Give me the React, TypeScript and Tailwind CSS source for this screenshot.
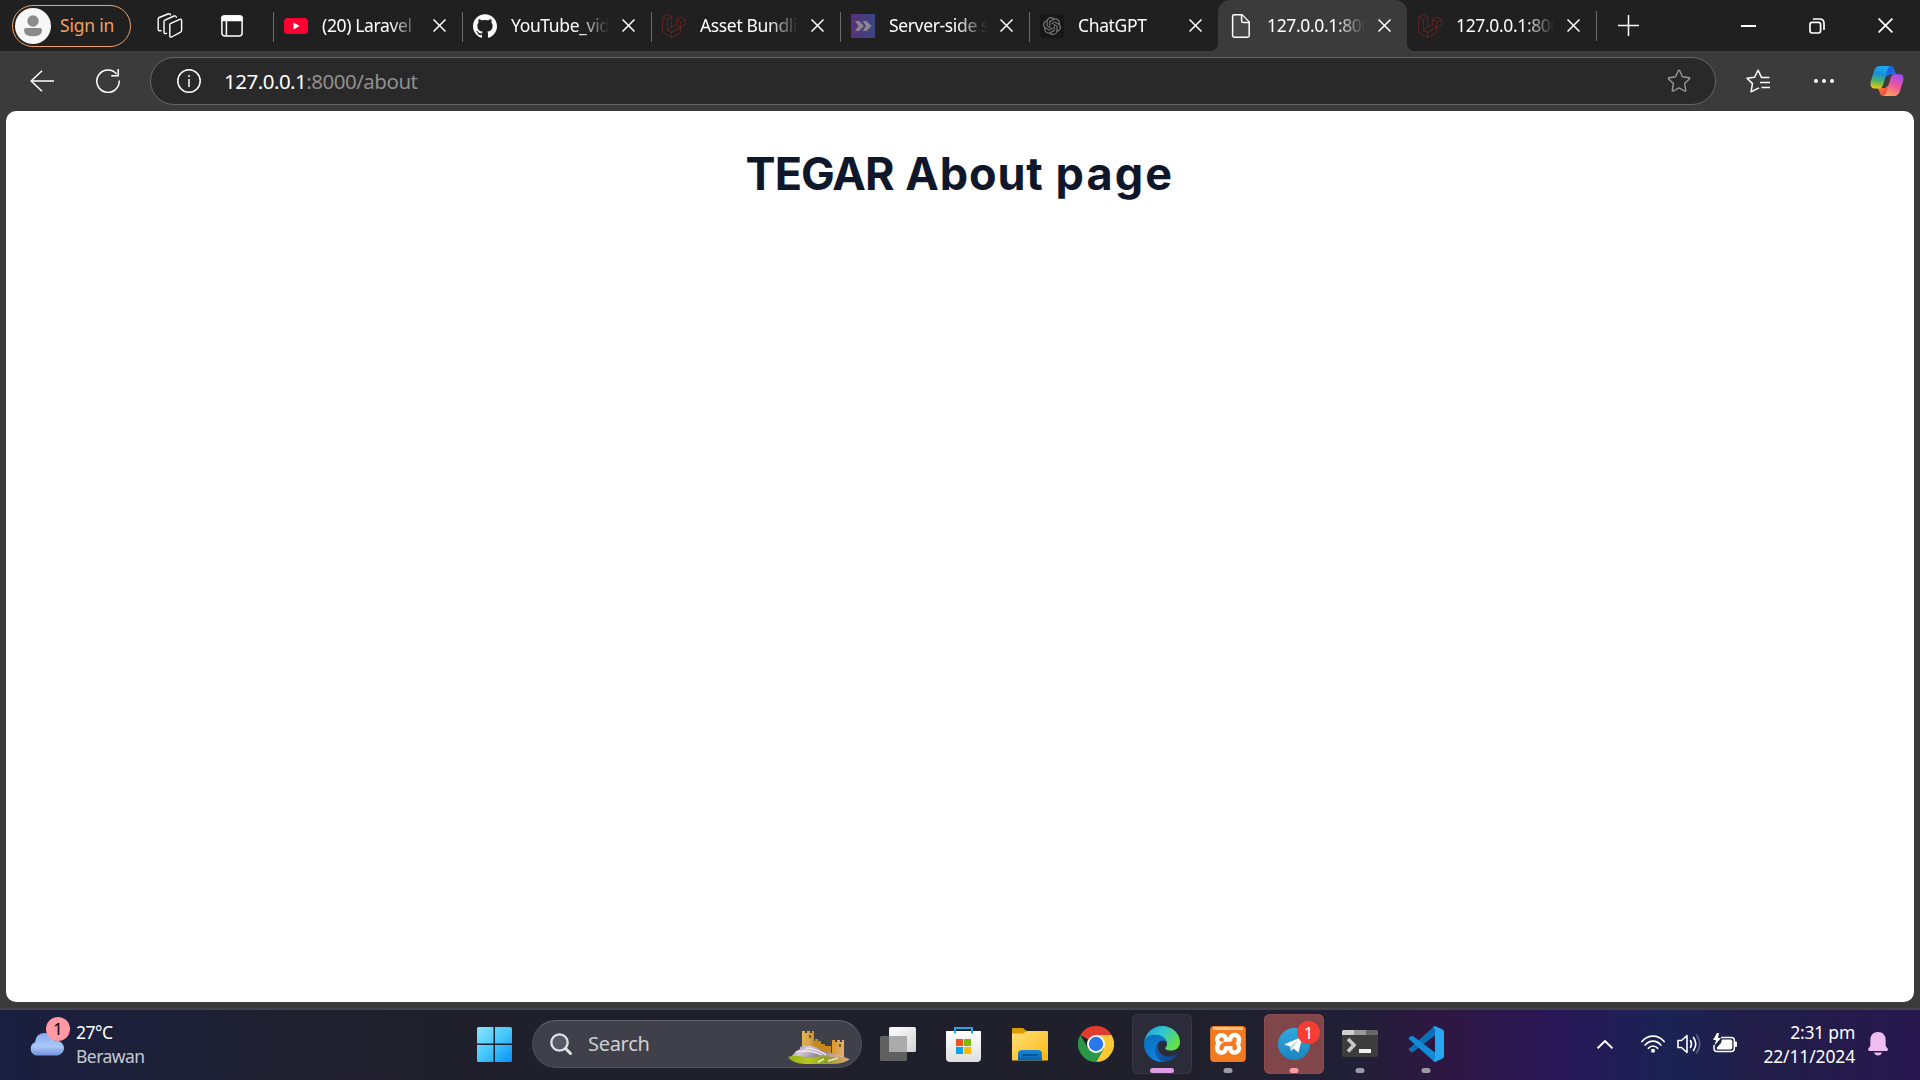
import React, { ReactNode } from "react";
import { SiGithub, SiLaravel, SiOpenai, SiXampp } from "react-icons/si";

const sans = "font-['Noto_Sans',sans-serif]";

function Close({ size = 13 }: { size?: number }) {
  return (
    <svg width={size} height={size} viewBox="0 0 13 13" stroke="#fff" strokeWidth="1.5" fill="none" className="shrink-0">
      <path d="M.5 .5L12.5 12.5M12.5 .5L.5 12.5" />
    </svg>
  );
}

const YouTube = () => (
  <svg width="24" height="24" viewBox="0 0 24 24">
    <rect y="4" width="24" height="16" rx="3.5" fill="#f03" />
    <path d="M9.5 8.6L15.7 12L9.5 15.4Z" fill="#fff" />
  </svg>
);
const Laravel = () => <SiLaravel size={24} color="#6f2520" />;
const Pipeline = () => (
  <svg width="24" height="24" viewBox="0 0 24 24">
    <defs>
      <linearGradient id="pipe" x2="1">
        <stop stopColor="#55327a" />
        <stop offset="1" stopColor="#3c4680" />
      </linearGradient>
    </defs>
    <rect width="24" height="24" fill="url(#pipe)" />
    <path d="M4 7H8L13 12L8 17H4L7.500 12ZM11.5 7H15.5L20.5 12L15.5 17H11.5L15 12Z" fill="#8c8490" />
  </svg>
);
const Gpt = () => (
  <div className="flex size-6 items-center justify-center rounded bg-[#171717]">
    <SiOpenai size={18} color="#777" />
  </div>
);
const Page = () => (
  <svg width="24" height="24" viewBox="0 0 24 24" fill="#484848" stroke="#fff" strokeWidth="1.5" strokeLinejoin="round">
    <path d="M5.2 .8H13L20.2 8V21.5Q20.2 23.2 18.5 23.2H5.2Q3.6 23.2 3.6 21.5V2.4Q3.6 .8 5.2 .8Z" />
    <path d="M12.6 1V7Q12.6 8.6 14.2 8.6H20" />
  </svg>
);

type TabData = { icon: ReactNode; text: string; active?: boolean; sep?: boolean };
const tabs: TabData[] = [
  { icon: <YouTube />, text: "(20) Laravel", sep: true },
  { icon: <SiGithub size={24} color="#fff" />, text: "YouTube_vide", sep: true },
  { icon: <Laravel />, text: "Asset Bundlin", sep: true },
  { icon: <Pipeline />, text: "Server-side s", sep: true },
  { icon: <Gpt />, text: "ChatGPT", sep: true },
  { icon: <Page />, text: "127.0.0.1:8000", active: true },
  { icon: <Laravel />, text: "127.0.0.1:8000" },
];

function Tab({ icon, text, active, sep }: TabData) {
  return (
    <div className={"relative flex h-[51px] w-[189px] shrink-0 items-center pl-[11px] " + (active ? "rounded-t-xl bg-[#3b3b3b]" : "")}>
      {sep && <div className="absolute left-0 top-3 h-[30px] w-px bg-[#6a6a6a]" />}
      {active && (
        <>
          <div className="absolute -left-2 bottom-0 size-2 bg-[radial-gradient(circle_at_0_0,#202020_8px,#3b3b3b_8.5px)]" />
          <div className="absolute -right-2 bottom-0 size-2 bg-[radial-gradient(circle_at_100%_0,#202020_8px,#3b3b3b_8.5px)]" />
        </>
      )}
      <div className="size-6 shrink-0">{icon}</div>
      <div className="-mt-px ml-[14px] w-[98px] overflow-hidden whitespace-nowrap text-[17.5px] leading-6 tracking-[-0.36px] text-white [mask-image:linear-gradient(90deg,#000_68px,transparent_100%)]">
        {text}
      </div>
      <div className="ml-[13px]"><Close /></div>
    </div>
  );
}

function BrowserTabs() {
  return (
    <div className="flex h-[51px] items-center bg-[#202020]">
      <div className="ml-3 flex h-[42px] w-[119px] items-center rounded-full border-[1.5px] border-[#f0a163] pl-[2px]">
        <svg width="36" height="36" viewBox="0 0 36 36">
          <circle cx="18" cy="18" r="18" fill="#f7f7f7" />
          <circle cx="18" cy="13" r="5.7" fill="#8b8b8b" />
          <path d="M11 20H25Q27 20 27 22Q27 28.3 18 28.3Q9 28.3 9 22Q9 20 11 20Z" fill="#8b8b8b" />
        </svg>
        <span className="ml-[9px] whitespace-nowrap text-[17.5px] tracking-[-0.2px] text-[#f0a163]">Sign in</span>
      </div>
      <svg className="ml-[26px]" width="26" height="26" viewBox="0 0 26 26" fill="none" stroke="#fff" strokeWidth="1.4" strokeLinejoin="round" strokeLinecap="round">
        <path d="M12.8 11.8Q12.8 10.7 13.8 10.3L22.8 6.3Q24.6 5.7 24.6 7.4V17.6Q24.6 18.6 23.6 19.1L14.6 24Q12.8 24.6 12.8 23Z" />
        <path d="M9.5 20.3Q7 21.3 7 19.3V8.6Q7 7.6 8 7.1L17 3Q19 2.4 19.3 4.2" />
        <path d="M4 17.6Q1.2 18.3 1.2 16.3V6Q1.2 5 2.2 4.5L11 1Q13 .4 13.4 1.8" />
      </svg>
      <svg className="ml-[38px]" width="22" height="22" viewBox="0 0 22 22" fill="none" stroke="#fff" strokeWidth="1.5">
        <rect x=".9" y=".9" width="20.2" height="20.2" rx="3" />
        <path d="M1 2.5Q1 1 3 1H19Q21 1 21 2.5V5.5H1Z" fill="#fff" />
        <path d="M5.4 6V21" />
      </svg>
      <div className="ml-[30px] flex">
        {tabs.map((t, i) => <Tab key={i} {...t} />)}
      </div>
      <div className="h-[30px] w-px bg-[#6a6a6a]" />
      <svg className="mb-px ml-[21px]" width="21" height="21" viewBox="0 0 21 21" stroke="#fff" strokeWidth="1.5"><path d="M10.5 0V21M0 10.5H21" /></svg>
      <div className="ml-auto mr-[27px] flex items-center gap-[53px]">
        <div className="h-[2px] w-[15px] bg-white" />
        <svg width="16" height="16" viewBox="0 0 16 16" fill="none" stroke="#fff" strokeWidth="1.700" strokeLinecap="round">
          <rect x="1" y="4.4" width="10.6" height="10.6" rx="2.2" />
          <path d="M4.6 1H10.500Q15 1 15 5.500V11.2" />
        </svg>
        <Close size={15} />
      </div>
    </div>
  );
}

function Copilot() {
  return (
    <svg width="34" height="32" viewBox="0 0 34 32">
      <defs>
        <linearGradient id="cpA" x1=".4" x2=".25" y2="1"><stop stopColor="#19a9ee" /><stop offset=".35" stopColor="#1b8fd8" /><stop offset=".65" stopColor="#4fb26b" /><stop offset="1" stopColor="#f5c80a" /></linearGradient>
        <linearGradient id="cpB" x1=".7" x2=".3" y2="1"><stop stopColor="#a44af2" /><stop offset=".5" stopColor="#f0569a" /><stop offset="1" stopColor="#ffa45a" /></linearGradient>
        <linearGradient id="cpC" x2="1" y2="1"><stop stopColor="#1450d8" /><stop offset="1" stopColor="#2480f5" /></linearGradient>
        <linearGradient id="cpD" x2="1" y2="1"><stop stopColor="#ff9a2e" /><stop offset="1" stopColor="#e8304a" /></linearGradient>
      </defs>
      <path d="M15 1H20.5Q23.3 1 24.2 4L25.3 7.5Q26 9.5 28 9.5H19L13 14Z" fill="url(#cpC)" />
      <path d="M19 31H13.5Q10.7 31 9.8 28L8.7 25Q8 23 6 23H15L21 18Z" fill="url(#cpD)" />
      <path d="M10 1H21Q18.4 1.5 17.4 5L13.4 19Q12 23.5 9 23.5H4.5Q-.6 23.5 .9 16L4 6Q5.5 1 10 1Z" fill="url(#cpA)" />
      <path d="M24 31H13Q15.6 30.5 16.6 27L20.6 13Q22 9.3 25 9.3H29.5Q34.6 9.3 33.1 16L30 26Q28.5 31 24 31Z" fill="url(#cpB)" />
    </svg>
  );
}

const starPath = "M12 1.2Q12.400 1.200 12.700 1.800L15.500 7.700L22 8.700Q23.200 9 22.400 9.900L17.600 14.500L18.700 21.200Q18.800 22.500 17.600 22L12 18.900L6.400 22Q5.200 22.500 5.300 21.200L6.400 14.500L1.600 9.900Q.8 9 2 8.700L8.500 7.700L11.300 1.800Q11.600 1.200 12 1.200Z";

function Toolbar() {
  return (
    <div className="flex h-[60px] items-center bg-[#3b3b3b]">
      <svg className="mb-px ml-[30px]" width="24" height="22" viewBox="0 0 24 22" fill="none" stroke="#fff" strokeWidth="1.5"><path d="M12 .7L1.2 11L12 21.3M1 11H24" /></svg>
      <svg className="ml-[42px]" width="24" height="24" viewBox="0 0 24 24" fill="none" stroke="#fff" strokeWidth="1.5">
        <path d="M20.6 5A11.2 11.2 0 1 0 23.2 11.5" /><path d="M22.2 0V6.7H15.2" />
      </svg>
      <div className="ml-[30px] flex h-12 w-[1566px] items-center rounded-full border border-[#666] bg-[#292929] pl-[26px] pr-6">
        <svg width="24" height="24" viewBox="0 0 24 24" fill="none" stroke="#fff" strokeWidth="1.5"><circle cx="12" cy="12" r="11.2" /><path d="M12 10V18M12 6V8" /></svg>
        <div className="-mt-px ml-[23px] whitespace-nowrap text-[20.5px] leading-6 tracking-[-0.5px] text-[#8f8f8f]"><span className="text-white">127.0.0.1</span>:8000/about</div>
        <svg className="ml-auto" width="24" height="24" viewBox="0 0 24 24" fill="none" stroke="#999" strokeWidth="1.4" strokeLinejoin="round"><path d={starPath} /></svg>
      </div>
      <svg className="ml-[30px]" width="24" height="24" viewBox="0 0 24 24" fill="none" stroke="#fff" strokeWidth="1.5" strokeLinejoin="round">
        <path d="M23.5 8.6H15.6L12 1.2L8.6 8.3L1 9.3L6.5 14.6L5 22.8L13 18.8M14 13.6H24M15.5 18.6H24" />
      </svg>
      <div className="ml-[44px] flex gap-[4px]">
        <i className="size-1 rounded-full bg-white" /><i className="size-1 rounded-full bg-white" /><i className="size-1 rounded-full bg-white" />
      </div>
      <div className="ml-auto mr-4"><Copilot /></div>
    </div>
  );
}

const Castle = () => (
  <svg width="62" height="34" viewBox="0 0 62 34">
    <defs>
      <linearGradient id="casA" x2="1"><stop stopColor="#e0b455" /><stop offset=".6" stopColor="#d9a548" /><stop offset="1" stopColor="#c98f30" /></linearGradient>
      <linearGradient id="casB" x2="1"><stop stopColor="#d89a2c" /><stop offset="1" stopColor="#e3ab78" /></linearGradient>
      <linearGradient id="casC" x2="1" y2=".4"><stop stopColor="#8c8490" /><stop offset=".3" stopColor="#d3c8d6" /><stop offset=".6" stopColor="#94869c" /><stop offset="1" stopColor="#e0b090" /></linearGradient>
      <linearGradient id="casD" x2="1"><stop stopColor="#93b216" /><stop offset=".35" stopColor="#b8c424" /><stop offset=".6" stopColor="#8aa41c" /><stop offset="1" stopColor="#e8a080" /></linearGradient>
    </defs>
    <path d="M20 9H24V11H27V9H30V11H33V14H37V16H43V28H20Z" fill="#c78a18" />
    <path d="M14 1H17V3H19V1H22V3H24V1H26V15L22 18L14 17Z" fill="url(#casA)" />
    <path d="M44 10H47V12H49V10H52V12H54V10H56V28H44Z" fill="url(#casB)" />
    <path d="M21 5h2v3h-2zM51 14h2v3h-2z" fill="#7a4e0c" />
    <path d="M4 26Q7 21 12 19Q11 16 16 16Q27 15 35 21Q48 23 58 28L50 32H8Z" fill="url(#casC)" />
    <path d="M8 22Q22 19 34 25M18 18Q30 19 38 25" stroke="#efe8f2" strokeWidth="1.3" fill="none" />
    <path d="M0 27Q8 24 20 28Q34 25 44 27Q54 26 62 29Q56 34 44 34H16Q4 33 0 27Z" fill="url(#casD)" />
    <path d="M30 32L36 29M40 31L50 28" stroke="#eee3cf" strokeWidth="1.6" />
  </svg>
);

const TaskView = () => (
  <svg width="36" height="36" viewBox="0 0 36 36">
    <defs><linearGradient id="tv" x2="1" y2="1"><stop stopColor="#fff" /><stop offset="1" stopColor="#d4d4d4" /></linearGradient></defs>
    <rect x="9" y="1" width="27" height="25" rx="1.5" fill="url(#tv)" />
    <rect y="10" width="27" height="25" rx="1.5" fill="#606060" />
    <rect x="9" y="10" width="18" height="16" fill="#ababab" />
  </svg>
);
const Store = () => (
  <svg width="36" height="36" viewBox="0 0 36 36">
    <defs><linearGradient id="st" x2="0" y2="1"><stop stopColor="#fff" /><stop offset="1" stopColor="#dedede" /></linearGradient></defs>
    <path d="M0 5H35V32Q35 36 31 36H4Q0 36 0 32Z" fill="url(#st)" />
    <path d="M9 7.5V2H26V7.5" fill="none" stroke="#22a7e6" strokeWidth="2" />
    <path d="M10 13h7v7h-7z" fill="#f25022" /><path d="M18 13h7v7h-7z" fill="#7fba00" />
    <path d="M10 21h7v7h-7z" fill="#00a4ef" /><path d="M18 21h7v7h-7z" fill="#ffb900" />
  </svg>
);
const Explorer = () => (
  <svg width="36" height="36" viewBox="0 0 36 36">
    <defs>
      <linearGradient id="fo" x2="1" y2="1"><stop stopColor="#ffe07a" /><stop offset="1" stopColor="#fbb80f" /></linearGradient>
      <linearGradient id="fb" x2="0" y2="1"><stop stopColor="#1689d8" /><stop offset="1" stopColor="#0a5fb0" /></linearGradient>
    </defs>
    <path d="M0 3Q0 2 1 2H11L16 6V10H0Z" fill="#dd9a05" />
    <path d="M0 7.5H11L15 5H35Q36 5 36 6V34.500H0Z" fill="url(#fo)" />
    <path d="M6 34.500V28Q6 24 10 24H26Q30 24 30 28V34.500Z" fill="url(#fb)" />
    <path d="M11 29H25" stroke="#0a4a8c" strokeWidth="1.600" strokeLinecap="round" />
  </svg>
);
const Chrome = () => (
  <svg width="36" height="36" viewBox="0 0 36 36">
    <path d="M18 18L2.410 9A18 18 0 0 1 33.590 9Z" fill="#e33b2e" />
    <path d="M18 9H33.590A18 18 0 0 1 18 36L25.800 22.500Z" fill="#fcc934" />
    <path d="M10.200 22.500L2.410 9A18 18 0 0 0 18 36L25.800 22.500Z" fill="#2a9847" />
    <circle cx="18" cy="18" r="9" fill="#fff" /><circle cx="18" cy="18" r="7.200" fill="#2a78ee" />
  </svg>
);
const Edge = () => (
  <svg width="36" height="36" viewBox="0 0 36 36">
    <defs>
      <linearGradient id="eA" x1="0" x2="1" y2=".5"><stop stopColor="#1b9de2" /><stop offset=".5" stopColor="#2fc5d2" /><stop offset="1" stopColor="#62e04a" /></linearGradient>
      <linearGradient id="eB" x2=".4" y2="1"><stop stopColor="#0d6fb8" /><stop offset="1" stopColor="#0a83e0" /></linearGradient>
      <linearGradient id="eC" x2="1"><stop stopColor="#0f5cae" /><stop offset="1" stopColor="#10407f" /></linearGradient>
    </defs>
    <path d="M0 17C1 7 9 0 18 0C29 0 36 8 36 16C36 22 31.500 24.500 27 24.500C23 24.500 20.800 23.300 21.200 22C22 21 23 20 23 18C23 13 18 9 11 9C5 9 1 13 0 17Z" fill="url(#eA)" />
    <path d="M0 18C0 12 5 8.800 11 8.800C17 8.800 22 12 23 16.500C20 13.500 14 14 12.500 20C11.500 27 17 35 24 34.700Q21 36 18 36C8 36 0 28 0 18Z" fill="url(#eB)" />
    <path d="M14.500 16C12 24 17 30.500 24 30.500C28 30.500 31 29 33.500 27.200Q34.500 27 34 28C31 33 25 36 20 36C12 34 8.500 24 14.500 16Z" fill="url(#eC)" />
  </svg>
);
const Xampp = () => (
  <div className="relative size-9">
    <div className="absolute inset-1 rounded bg-white" />
    <SiXampp size={36} color="#f47a20" className="relative" />
    <div className="absolute inset-x-[3px] top-px h-[3px] rounded-full bg-[#fac090]" />
  </div>
);
const Telegram = () => (
  <div className="relative flex size-8 items-center justify-center rounded-full bg-[linear-gradient(#2fa9dd,#1b86bf)]">
    <svg width="32" height="32" viewBox="0 0 32 32"><path d="M6 16.500L24.500 8.500L20.500 24.500L15.500 20.500L13 23L12 18.500Z" fill="#fff" /><path d="M12 18.500L21 11.500L14.500 19.800L13 23Z" fill="#b9d5e5" /></svg>
    <div className="absolute -top-[7px] left-[19px] flex size-[23px] items-center justify-center rounded-full bg-[#f53d35] text-[17px] text-white">1</div>
  </div>
);
const Terminal = () => (
  <svg width="36" height="36" viewBox="0 0 36 36">
    <rect y="4" width="36" height="27" rx="1.500" fill="#3c3c3c" />
    <path d="M0 9V5.500Q0 4 1.500 4H12V9Z" fill="#cfcfcf" /><path d="M12 4H24V9H12Z" fill="#999" /><path d="M24 4H34.500Q36 4 36 5.500V9H24Z" fill="#686868" />
    <path d="M6 13L12 19L6 25.500" fill="none" stroke="#c8c8c8" strokeWidth="3.600" /><rect x="17" y="23" width="12" height="4" fill="#f2f2f2" />
  </svg>
);
const VsCode = () => (
  <svg width="36" height="36" viewBox="0 0 36 36">
    <path d="M.8 23L25.500 1L27 .5V9.500L5 25.900Q4 26.600 3 26L.8 24Q.2 23.500 .8 23Z" fill="#0b70b6" />
    <path d="M.8 13L25.500 35L27 35.500V26.500L5 10.100Q4 9.400 3 10L.8 12Q.2 12.500 .8 13Z" fill="#128bd8" />
    <path d="M27 0L34.500 3.400Q36 4.200 36 6V30Q36 31.800 34.500 32.600L27 36L25 35L27 33V3L25 1Z" fill="#27a7f2" />
  </svg>
);

type TaskApp = { icon: ReactNode; tile?: string; mark?: string };
const apps: TaskApp[] = [
  { icon: <TaskView /> },
  { icon: <Store /> },
  { icon: <Explorer /> },
  { icon: <Chrome /> },
  { icon: <Edge />, tile: "ring-1 ring-inset ring-[#383845] bg-[#2b2b39]", mark: "w-6 bg-[#dc9de4]" },
  { icon: <Xampp />, mark: "w-[9px] bg-[#9c9aa5]" },
  { icon: <Telegram />, tile: "ring-1 ring-inset ring-[#8a4c50] bg-[#80464a]", mark: "w-[9px] bg-[#ff99a4]" },
  { icon: <Terminal />, mark: "w-[9px] bg-[#9c9aa5]" },
  { icon: <VsCode />, mark: "w-[9px] bg-[#9c9aa5]" },
];

function Taskbar() {
  return (
    <div className="flex h-[72px] items-center border-t-2 border-[#42414d] bg-[linear-gradient(90deg,#1b1f40_0,#1c203a_120px,#20212f_300px,#20202c_480px,#20202c_1180px,#211f36_1350px,#2e1742_1440px,#291858_1560px,#1a2354_1670px,#211e48_1750px,#27184f_1920px)] pb-[2px]">
      <div className="relative mb-4 ml-[29px] h-[38px] w-9">
        <svg className="mt-[15px]" width="36" height="24" viewBox="0 0 36 24">
          <defs><linearGradient id="cl" x2="0" y2="1"><stop stopColor="#86aaf0" /><stop offset=".6" stopColor="#a9c8f8" /><stop offset="1" stopColor="#7192dc" /></linearGradient></defs>
          <path d="M7 23.500A7 7 0 0 1 6 10.300Q7 1 16 1Q23 1 26 8.800A7.200 7.200 0 0 1 29 23.500Z" fill="url(#cl)" />
        </svg>
        <div className="absolute left-[17px] top-0 flex size-6 items-center justify-center rounded-full bg-[#ff99a4] text-[16.500px] text-black">1</div>
      </div>
      <div className="ml-[11px] w-[100px] whitespace-nowrap text-[17.5px] leading-[24px] text-white">
        <div className="tracking-[-0.500px]">27°C</div>
        <div className="tracking-[-0.550px] text-[#c8c8d0]">Berawan</div>
      </div>
      <svg className="ml-[301px]" width="35" height="35" viewBox="0 0 35 35">
        <defs><linearGradient id="win" gradientUnits="userSpaceOnUse" x2="35" y2="35"><stop stopColor="#8be4ff" /><stop offset=".5" stopColor="#45c8fb" /><stop offset="1" stopColor="#0890f8" /></linearGradient></defs>
        <path d="M1.500 0H16.500V16.500H0V1.500Q0 0 1.500 0ZM18 0H33.500Q35 0 35 1.500V16.500H18ZM0 18H16.500V35H1.500Q0 35 0 33.500ZM18 18H35V33.500Q35 35 33.500 35H18Z" fill="url(#win)" />
      </svg>
      <div className="ml-5 flex h-12 w-[330px] items-center rounded-full border border-[#4e4e59] border-t-[#65646f] bg-[#40404b] pl-[17px] pr-[11px]">
        <svg width="22" height="22" viewBox="0 0 22 22" fill="none" stroke="#e2e2e6" strokeWidth="2.300" strokeLinecap="round"><circle cx="9.500" cy="9.500" r="8.200" fill="#5a5a64" /><path d="M15.500 15.500L20.500 20.500" strokeWidth="3" /></svg>
        <span className="ml-4 text-[20px] tracking-[-0.300px] text-[#cfcfd3]">Search</span>
        <div className="ml-auto mt-[6px]"><Castle /></div>
      </div>
      <div className="ml-[6px] flex gap-[6px]">
        {apps.map((a, i) => (
          <div key={i} className={"relative flex size-[60px] items-center justify-center rounded-md " + (a.tile ?? "")}>
            {a.icon}
            {a.mark && <div className={"absolute bottom-px left-1/2 h-[5px] -translate-x-1/2 rounded-full " + a.mark} />}
          </div>
        ))}
      </div>
      <div className="ml-auto mr-8 flex items-center">
        <svg width="16" height="9" viewBox="0 0 16 9" fill="none" stroke="#fff" strokeWidth="1.900"><path d="M.6 8.300L8 1L15.400 8.300" /></svg>
        <svg className="ml-7" width="24" height="18" viewBox="0 0 24 18" fill="none" stroke="#fff" strokeWidth="1.700" strokeLinecap="round">
          <path d="M.9 6.500Q5.500 1.200 12 1.200T23.100 6.500M4.200 10Q7.500 6.200 12 6.200T19.800 10M7.400 13.300Q9.300 11 12 11T16.600 13.300" /><circle cx="12" cy="15.700" r="2" fill="#fff" stroke="none" />
        </svg>
        <svg className="ml-3" width="24" height="20" viewBox="0 0 24 20" fill="none" stroke="#fff" strokeWidth="1.600" strokeLinejoin="round" strokeLinecap="round">
          <path d="M1 6.500H4.500L10 1.500V18.500L4.500 13.500H1Z" /><path d="M13.500 6.500Q15.500 10 13.500 13.500M16.500 3.500Q21 10 16.500 16.500" /><path d="M19.500 1Q26 10 19.500 19" stroke="#5d5f82" />
        </svg>
        <svg className="-mt-[3px] ml-3" width="24" height="20" viewBox="0 0 24 20">
          <path d="M8 4.500H18.500Q21.300 4.500 21.300 7.300V15.500Q21.300 18.500 18.500 18.500H4Q1 18.500 1 15.500V12" fill="none" stroke="#fff" strokeWidth="1.500" />
          <path d="M9 6.500H17.500Q19.300 6.500 19.300 8.300V14.700Q19.300 16.500 17.500 16.500H4.500L3.500 15L8 10Z" fill="#fff" /><path d="M21.500 8.500H23Q24 8.500 24 9.500V13Q24 14 23 14H21.500Z" fill="#fff" />
          <path d="M4 0L0 7H3L1.500 12.500L8 5H5L6 0Z" fill="#fff" />
        </svg>
        <div className="ml-[26px] w-[92px] whitespace-nowrap text-right text-[17.5px] leading-[24px] text-white">
          <div className="tracking-[-0.250px]">2:31 pm</div>
          <div className="tracking-[-0.150px]">22/11/2024</div>
        </div>
        <svg className="ml-[13px]" width="20" height="24" viewBox="0 0 20 24" fill="#efbdf2"><path d="M10 0Q17.700 0 17.700 8.500V14L20 17Q20 19 18.500 19H1.500Q0 19 0 17L2.300 14V8.500Q2.300 0 10 0ZM6 20.500H14Q13 23.500 10 23.500T6 20.500Z" /></svg>
      </div>
    </div>
  );
}

export default function App() {
  return (
    <div className={"flex h-[1080px] w-[1920px] flex-col overflow-hidden bg-[#3b3b3b] " + sans}>
      <BrowserTabs />
      <Toolbar />
      <main className="mx-[6px] mb-[6px] flex-1 rounded-[10px] bg-white pt-8 text-center">
        <h1 className="whitespace-nowrap font-['Inter',sans-serif] text-[45px] leading-[62px] font-bold text-[#0f172a] [word-spacing:1px]">
          <span className="tracking-[-1px]">TEGAR</span> <span className="tracking-[0.9px]">About</span> <span className="tracking-[2.2px]">page</span>
        </h1>
      </main>
      <Taskbar />
    </div>
  );
}
